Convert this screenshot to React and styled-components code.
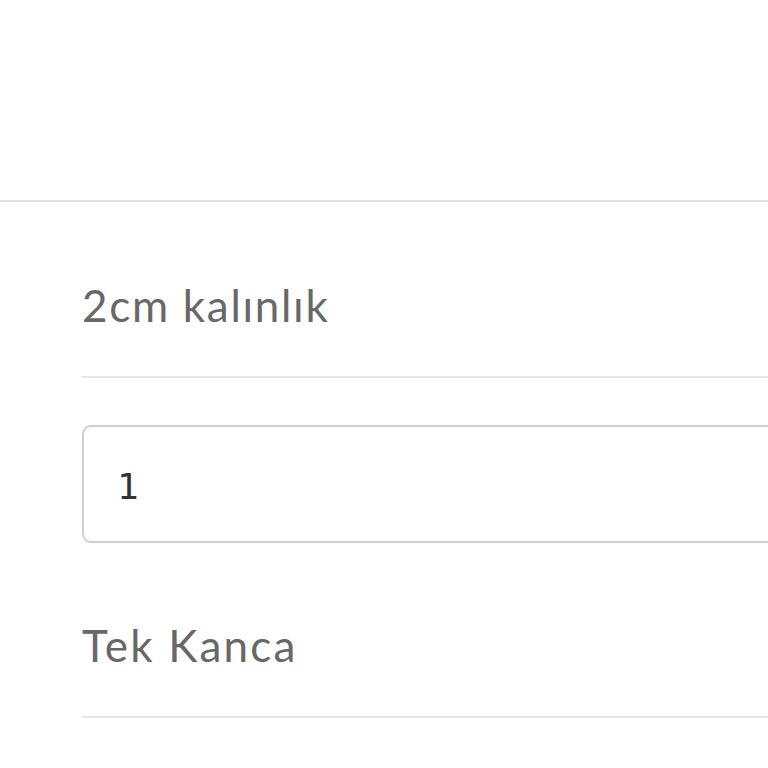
import React from "react";
import styled, { createGlobalStyle } from "styled-components";

const Global = createGlobalStyle`
  html, body { margin: 0; padding: 0; background: #fff; overflow: hidden; }
  body { font-family: "Lato", "Open Sans", sans-serif; }
`;

const Page = styled.div`
  width: 100%;
  min-height: 768px;
  overflow: hidden;
`;

const Header = styled.div`
  height: 200px;
  border-bottom: 2px solid #e2e2e2;
`;

const Body = styled.div`
  padding-left: 82px;
  margin-right: -40px;
  display: flex;
  flex-direction: column;
`;

const Label = styled.div`
  font-family: "Lato", "Open Sans", sans-serif;
  font-size: 44px;
  line-height: 52px;
  letter-spacing: ${(p) => p.$spacing}px;
  color: #686868;
  padding-top: ${(p) => p.$top}px;
  padding-bottom: 45px;
  border-bottom: 2px solid #e6e6e6;
`;

const Input = styled.input`
  margin-top: 47px;
  height: 118px;
  box-sizing: border-box;
  border: 2px solid #cfcfcf;
  border-radius: 9px;
  padding: 4px 0 0 33px;
  font-family: "DejaVu Sans Mono", "Liberation Mono", monospace;
  font-size: 36px;
  color: #333;
  background: #fff;
  outline: none;
  width: 100%;
`;

export default function App() {
  return (
    <Page>
      <Global />
      <Header />
      <Body>
        <Label $top={77} $spacing={1.7}>2cm kalınlık</Label>
        <Input defaultValue="1" />
        <Label $top={76} $spacing={2.2}>Tek Kanca</Label>
      </Body>
    </Page>
  );
}
